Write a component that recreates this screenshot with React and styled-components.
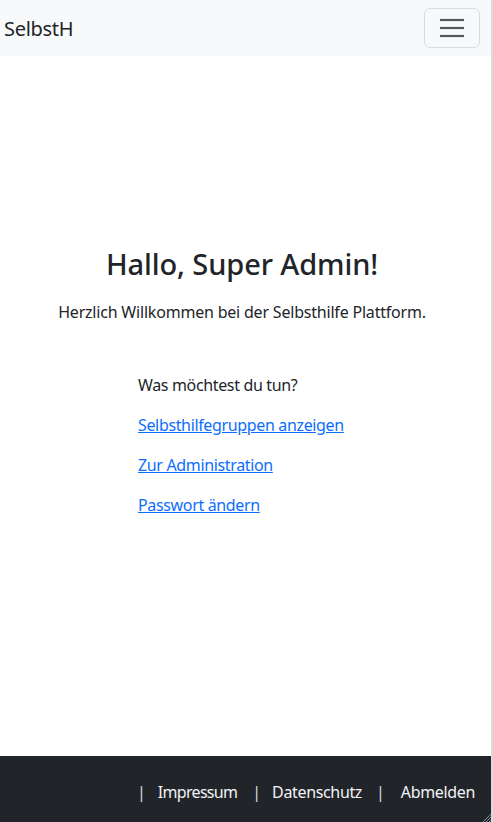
import React from 'react';
import styled, { createGlobalStyle } from 'styled-components';

const GlobalStyle = createGlobalStyle`
  html, body {
    margin: 0;
    padding: 0;
    height: 100%;
  }
  body {
    font-family: "Noto Sans", "Open Sans", sans-serif;
    color: #212529;
    background: #fff;
  }
  #root {
    height: 100%;
  }
`;

const Page = styled.div`
  position: relative;
  box-sizing: border-box;
  height: 822px;
  display: flex;
  flex-direction: column;
  border-right: 2px solid #dadada;
`;

const Navbar = styled.nav`
  height: 56px;
  background: #f8f9fa;
  display: flex;
  align-items: center;
  justify-content: space-between;
  padding: 0 11px 0 4px;
`;

const Brand = styled.a`
  font-size: 20px;
  color: #212529;
  text-decoration: none;
  letter-spacing: -0.3px;
`;

const Toggler = styled.button`
  width: 56px;
  height: 40px;
  box-sizing: border-box;
  background: transparent;
  border: 1px solid rgba(0, 0, 0, 0.12);
  border-radius: 6px;
  display: flex;
  align-items: center;
  justify-content: center;
  padding: 0;
`;

const Main = styled.main`
  flex: 1;
  display: flex;
  flex-direction: column;
  align-items: center;
  padding: 190px 7px 0 0;
`;

const Heading = styled.h1`
  margin: 0;
  font-size: 29px;
  font-weight: 500;
  line-height: 35px;
  letter-spacing: -0.1px;
`;

const Lead = styled.p`
  margin: 19px 0 0;
  font-size: 16px;
  line-height: 24px;
  letter-spacing: -0.2px;
`;

const Actions = styled.div`
  margin-top: 49px;
  display: flex;
  flex-direction: column;
  gap: 16px;
  align-self: flex-start;
  margin-left: 138px;
`;

const ActionText = styled.span`
  font-size: 16px;
  line-height: 24px;
  letter-spacing: -0.35px;
`;

const ActionLink = styled.a`
  font-size: 16px;
  line-height: 24px;
  color: #0d6efd;
  text-decoration: underline;
  letter-spacing: -0.35px;
`;

const Footer = styled.footer`
  position: relative;
  height: 66px;
  background: #212529;
  display: flex;
  align-items: center;
  justify-content: flex-end;
  padding: 6px 16px 0 0;
  box-sizing: border-box;
`;

const FooterItem = styled.a`
  color: #f1f3f5;
  font-size: 16px;
  text-decoration: none;
  letter-spacing: ${(p) => p.tight ? -0.7 : -0.35}px;
  margin-left: ${(p) => p.gap}px;
`;

const Pipe = styled.span`
  color: #d8dde2;
  font-size: 16px;
  margin-left: ${(p) => p.gap}px;
`;

const Grip = styled.svg`
  position: absolute;
  right: 0;
  bottom: 0;
`;

const HamburgerIcon = () => (
  <svg width="26" height="22" viewBox="0 0 26 22">
    <g stroke="#555a5f" strokeWidth="2.2" strokeLinecap="butt">
      <line x1="1" y1="3" x2="25" y2="3" />
      <line x1="1" y1="11" x2="25" y2="11" />
      <line x1="1" y1="19" x2="25" y2="19" />
    </g>
  </svg>
);

const App = () => {
  return (
    <>
      <GlobalStyle />
      <Page>
        <Navbar>
          <Brand href="#">SelbstH</Brand>
          <Toggler aria-label="Navigation">
            <HamburgerIcon />
          </Toggler>
        </Navbar>

        <Main>
          <Heading>Hallo, Super Admin!</Heading>
          <Lead>Herzlich Willkommen bei der Selbsthilfe Plattform.</Lead>
          <Actions>
            <ActionText>Was möchtest du tun?</ActionText>
            <ActionLink href="#">Selbsthilfegruppen anzeigen</ActionLink>
            <ActionLink href="#">Zur Administration</ActionLink>
            <ActionLink href="#">Passwort ändern</ActionLink>
          </Actions>
        </Main>

        <Footer>
          <Pipe gap={0}>|</Pipe>
          <FooterItem href="#" gap={12} tight>Impressum</FooterItem>
          <Pipe gap={15}>|</Pipe>
          <FooterItem href="#" gap={11}>Datenschutz</FooterItem>
          <Pipe gap={14}>|</Pipe>
          <FooterItem href="#" gap={16}>Abmelden</FooterItem>
          <Grip width="10" height="10" viewBox="0 0 10 10">
            <g stroke="#8a8f94" strokeWidth="1">
              <line x1="2" y1="10" x2="10" y2="2" />
              <line x1="5" y1="10" x2="10" y2="5" />
              <line x1="8" y1="10" x2="10" y2="8" />
            </g>
          </Grip>
        </Footer>
      </Page>
    </>
  );
};

export default App;
